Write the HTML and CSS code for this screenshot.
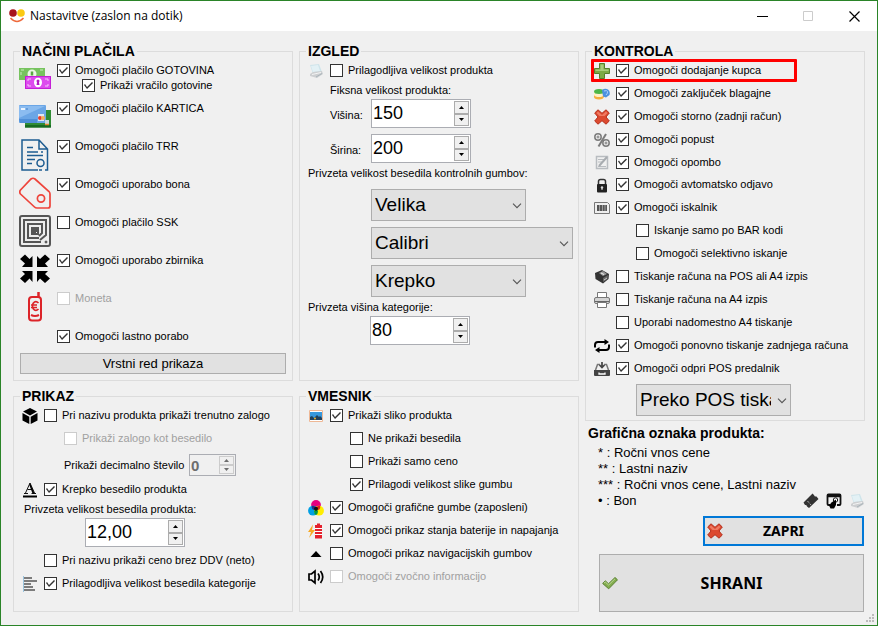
FILE: index.html
```html
<!DOCTYPE html>
<html lang="sl">
<head>
<meta charset="utf-8">
<title>Nastavitve (zaslon na dotik)</title>
<link rel="stylesheet" href="styles.css">
</head>
<body>
<svg class="defs" aria-hidden="true">
  <symbol id="scanner" viewBox="0 0 16 16"><path d="M2 2l9-1 3 8-9 2z" fill="#cfe4ea"/><path d="M3 3l7-1 2 6-7 1z" fill="#e3f1f5"/><path d="M2 11l3-2 9-1 1 3-6 4-7-2z" fill="#cdcfd1"/><path d="M4 11.500l9-2" stroke="#f4f4f4" fill="none"/><path d="M8 14l6-3.500" stroke="#a9b4bb" fill="none"/></symbol>
  <symbol id="cross" viewBox="0 0 16 16"><path d="M4 .8l4 3.500 4-3.500 3.300 3.200L12 8l3.300 4-3.300 3.200-4-3.500-4 3.500L.7 12 4 8 .7 4z" fill="#dc4a30" stroke="#b5301d" stroke-linejoin="round"/><path d="M4 2.500l4 3.500 4-3.500 1.500 1.500L10.500 7h-5l-3-3z" fill="#f07a62"/></symbol>
  <symbol id="spin-up" viewBox="0 0 5 3"><path d="M0 3h5L2.500 0z" fill="currentColor"/></symbol>
  <symbol id="spin-down" viewBox="0 0 5 3"><path d="M0 0h5L2.500 3z" fill="currentColor"/></symbol>
  <symbol id="chevron" viewBox="0 0 10 6"><path d="M1 .7l4 4 4-4" fill="none" stroke="#555" stroke-width="1.100"/></symbol>
</svg>
<div class="window">
  <header class="titlebar">
    <svg class="logo" viewBox="0 0 16 14"><circle cx="4" cy="4" r="3.800" fill="#a8141c"/><circle cx="12" cy="4" r="3.800" fill="#fbc912"/><path d="M1.500 9q6.500 7 13 0" fill="none" stroke="#ee6a3c" stroke-width="1.500"/></svg>
    <h1>Nastavitve (zaslon na dotik)</h1>
    <button class="caption" aria-label="Minimiraj"><svg viewBox="0 0 11 11"><path d="M0 5.500h11" stroke="#000"/></svg></button>
    <button class="caption" aria-label="Povečaj" disabled><svg viewBox="0 0 11 11"><path d="M.5.5h9v9h-9z" fill="none" stroke="#ccc"/></svg></button>
    <button class="caption" aria-label="Zapri okno"><svg viewBox="0 0 11 11"><path d="M.5.5l10 10M10.500.5l-10 10" stroke="#000" stroke-width="1.200"/></svg></button>
  </header>
  <main>
    <div class="column">
      <fieldset class="payments">
        <legend>NAČINI PLAČILA</legend>
        <div class="pay">
          <svg viewBox="0 0 32 32"><path d="M0 5h26v12H0z" fill="#77c35f"/><path d="M2 7h22v9H2z" fill="none" stroke="#c9edbd" stroke-dasharray="3 16"/><ellipse cx="13" cy="11" rx="4.500" ry="4.500" fill="#eaf7e5"/><path d="M13 8.500v4" stroke="#5aa744" stroke-width="2.500"/><path d="M6 13h26v13H6z" fill="#c41fd6"/><path d="M7 14h24v11H7z" fill="#dd4bee"/><path d="M9 18v-2h3M26 16h3v2M9 21v2h3M26 23h3v-2" fill="none" stroke="#f6c6fb"/><ellipse cx="19" cy="19.500" rx="4" ry="4.800" fill="#fff"/><path d="M17.500 18a1.500 1.500 0 013 0l-.5 1.500.5 2.500h-3l.5-2.500z" fill="#b21ac4"/></svg>
          <div><label><input type="checkbox" checked><span>Omogoči plačilo GOTOVINA</span></label>
          <label class="sub"><input type="checkbox" checked><span>Prikaži vračilo gotovine</span></label></div>
        </div>
        <div class="pay">
          <svg viewBox="0 0 32 32"><path d="M6 9h26v17.500H6z" fill="#2f8b34"/><path d="M6 24h26v2.500H6z" fill="#176b22"/><rect y="4" width="27" height="18" rx="1" fill="#6ba6e6"/><path d="M0 5h26L0 17z" fill="#8bbcf0"/><path d="M2 8h4" stroke="#e9f3ff" stroke-width="2"/><path d="M7 8h2" stroke="#3e7fc8"/><path d="M0 18h18v4H1z" fill="#4f8fd8"/><path d="M19 13h6v7h-6z" fill="#dfe8f2"/><circle cx="21" cy="17" r="2" fill="#e63c2c"/><circle cx="24" cy="17" r="2" fill="#f5b05a"/><path d="M26 19h4v5h-4z" fill="#c9d8dc"/><path d="M26 23.500h4" stroke="#e6842c" stroke-width="1.500"/></svg>
          <div><label><input type="checkbox" checked><span>Omogoči plačilo KARTICA</span></label></div>
        </div>
        <div class="pay">
          <svg viewBox="0 0 32 32" fill="none" stroke="#1d5c91" stroke-width="1.500"><path d="M19 31H3V1h17l8.500 9v21H26M20 1v9h8.500M8 8.500h6M8 13h11M22 13h2M8 16.500h16M8 20.500h8M8 24.500h5M20 31h3"/><circle cx="21.500" cy="24" r="3.500"/></svg>
          <div><label><input type="checkbox" checked><span>Omogoči plačilo TRR</span></label></div>
        </div>
        <div class="pay">
          <svg viewBox="0 0 32 32" fill="none" stroke="#ee443b" stroke-width="1.700"><path d="M12 2q2-1.500 4 0L30 14.500q1 1 1 2.500v12q0 2-2 2H18q-1.500 0-2.500-1L1.500 17q-1.500-2 0-4z"/><circle cx="22" cy="21.500" r="3.600"/></svg>
          <div><label><input type="checkbox" checked><span>Omogoči uporabo bona</span></label></div>
        </div>
        <div class="pay">
          <svg viewBox="0 0 32 32" fill="none" stroke="#555" stroke-width="2"><rect x="1" y="1" width="30" height="30" rx="2" fill="#ededed"/><path d="M22 27H5V5h22v15l-6 5M20 23H9V9h14v9l-3 3M17 19v0h-4v-6h6v6z"/><path d="M12 12h8v5h-3v3h-5z" fill="#555" stroke="none"/><circle cx="27" cy="27" r="1" fill="#555" stroke-width="1"/></svg>
          <div><label><input type="checkbox"><span>Omogoči plačilo SSK</span></label></div>
        </div>
        <div class="pay">
          <svg viewBox="0 0 32 32"><path d="M13.500 14H3l3-3.500L1 6l5-4.500 4.500 4.500 3-3zM18 14h11l-3-3.500 5-4.500-5-4.500L21 6l-3-3zM13.500 18H3l3 3-5 4.500L6 30l4.500-4.500 3 3.500zM18 18h11l-3 3 5 4.500-5 4.500-5-4.500-3 3.500z"/></svg>
          <div><label><input type="checkbox" checked><span>Omogoči uporabo zbirnika</span></label></div>
        </div>
        <div class="pay">
          <svg viewBox="0 0 32 32" fill="none" stroke="#dc2429" stroke-width="2"><rect x="10" y="6" width="12" height="23.500" rx="3"/><path d="M19.500 7V1" stroke-width="2.500"/><path d="M12 24q4 2 8 0"/><path d="M19.500 12q-2-2-4-1t-2 4 2 4 4-1M12 14h6M12 16.500h6" stroke-width="1.600"/></svg>
          <div><label class="off"><input type="checkbox" disabled><span>Moneta</span></label></div>
        </div>
        <div class="pay last">
          <div><label><input type="checkbox" checked><span>Omogoči lastno porabo</span></label></div>
        </div>
        <button class="order">Vrstni red prikaza</button>
      </fieldset>
      <fieldset class="fill">
        <legend>PRIKAZ</legend>
        <div class="rows">
          <div class="row"><svg viewBox="0 0 16 16"><path d="M8 0l7 3.500-7 4-7-4zM.5 5L7.300 8.700V16L.5 12.500zM15.500 5L8.700 8.700V16l6.800-3.500z"/></svg><label><input type="checkbox"><span>Pri nazivu produkta prikaži trenutno zalogo</span></label></div>
          <div class="row nested"><label class="off"><input type="checkbox" disabled><span>Prikaži zalogo kot besedilo</span></label></div>
          <div class="decimals"><label for="dec">Prikaži decimalno število</label><div class="spin small"><input id="dec" type="text" value="0" disabled><div><button disabled aria-label="Več"><svg><use href="#spin-up"/></svg></button><button disabled aria-label="Manj"><svg><use href="#spin-down"/></svg></button></div></div></div>
          <div class="row"><svg viewBox="0 0 16 16"><path d="M1 14.500h14" stroke="#000" stroke-width="2"/><path d="M2 11.500h4M9.500 11.500H14M3.500 11L8 1l4.500 10M5.500 7.500h5" fill="none" stroke="#111"/><path d="M8 1l4.500 10.500h-2L7.300 3z"/></svg><label><input type="checkbox" checked><span>Krepko besedilo produkta</span></label></div>
          <label class="caption-line" for="prodsize">Privzeta velikost besedila produkta:</label>
          <div class="spin product"><input id="prodsize" type="text" value="12,00"><div><button aria-label="Več"><svg><use href="#spin-up"/></svg></button><button aria-label="Manj"><svg><use href="#spin-down"/></svg></button></div></div>
          <div class="row"><label class="no-icon"><input type="checkbox"><span>Pri nazivu prikaži ceno brez DDV (neto)</span></label></div>
          <div class="row"><svg viewBox="0 0 16 16"><path d="M1.500 0v16" stroke="#9bc4de"/><path d="M2 2h8M2 5h13M2 8h7M2 11h9M2 14h11" stroke="#555" stroke-width="1.700"/></svg><label><input type="checkbox" checked><span>Prilagodljiva velikost besedila kategorije</span></label></div>
        </div>
      </fieldset>
    </div>

    <div class="column">
      <fieldset class="look">
        <legend>IZGLED</legend>
        <div class="rows">
          <div class="row"><svg><use href="#scanner"/></svg><label><input type="checkbox"><span>Prilagodljiva velikost produkta</span></label></div>
          <p class="fixed">Fiksna velikost produkta:</p>
          <div class="measures">
            <div class="measure"><label for="h">Višina:</label><div class="spin"><input id="h" type="text" value="150"><div><button aria-label="Več"><svg><use href="#spin-up"/></svg></button><button aria-label="Manj"><svg><use href="#spin-down"/></svg></button></div></div></div>
            <div class="measure"><label for="w">Širina:</label><div class="spin"><input id="w" type="text" value="200"><div><button aria-label="Več"><svg><use href="#spin-up"/></svg></button><button aria-label="Manj"><svg><use href="#spin-down"/></svg></button></div></div></div>
          </div>
          <label class="line" for="textsize">Privzeta velikost besedila kontrolnih gumbov:</label>
          <div class="selects">
            <div class="select"><select id="textsize"><option>Velika</option></select><svg><use href="#chevron"/></svg></div>
            <div class="select wide"><select aria-label="Pisava"><option>Calibri</option></select><svg><use href="#chevron"/></svg></div>
            <div class="select"><select aria-label="Slog pisave"><option>Krepko</option></select><svg><use href="#chevron"/></svg></div>
          </div>
          <label class="line" for="cat">Privzeta višina kategorije:</label>
          <div class="spin category"><input id="cat" type="text" value="80"><div><button aria-label="Več"><svg><use href="#spin-up"/></svg></button><button aria-label="Manj"><svg><use href="#spin-down"/></svg></button></div></div>
        </div>
      </fieldset>
      <fieldset class="fill">
        <legend>VMESNIK</legend>
        <div class="rows">
          <div class="row"><svg viewBox="0 0 16 16"><path d="M1.500 2.500h13v11h-13z" fill="#fff" stroke="#eeb896"/><path d="M2 4h12v8H2z" fill="#3798dc"/><path d="M2 12V9l2-1 2 2 3-3 2 2 1-1 2 2v2z" fill="#22415a"/><circle cx="7" cy="10.500" r="1" fill="#f0b429"/></svg><label><input type="checkbox" checked><span>Prikaži sliko produkta</span></label></div>
          <div class="row nested"><label><input type="checkbox"><span>Ne prikaži besedila</span></label></div>
          <div class="row nested"><label><input type="checkbox"><span>Prikaži samo ceno</span></label></div>
          <div class="row nested"><label><input type="checkbox" checked><span>Prilagodi velikost slike gumbu</span></label></div>
          <div class="row"><svg viewBox="0 0 16 16"><circle cx="8" cy="5" r="4.900" fill="#e6007e"/><circle cx="5" cy="10.700" r="4.900" fill="#009fe3"/><circle cx="11" cy="10.700" r="4.900" fill="#ffed00"/><path d="M4 6q2-1 4 2v1l-2 1q-3-1-2-4z" fill="#2b2f83"/><path d="M12 6q-2-1-4 2v1l2 1q3-1 2-4z" fill="#e3231c"/><path d="M8 9l2 2q0 3-2 4-2-1-2-4z" fill="#009640"/><circle cx="8" cy="8.800" r="2" fill="#111"/></svg><label><input type="checkbox" checked><span>Omogoči grafične gumbe (zaposleni)</span></label></div>
          <div class="row"><svg viewBox="0 0 16 16"><path d="M5 1.500L0 9h3l-2 6 6-8H4z" fill="#f7a823"/><path d="M9 .5h3V2H9zM7 2h7v13.500H7z" fill="#e4202c"/><path d="M7 5.500h7M7 8.500h7M7 11.500h7" stroke="#fff"/></svg><label><input type="checkbox" checked><span>Omogoči prikaz stanja baterije in napajanja</span></label></div>
          <div class="row"><svg viewBox="0 0 16 16"><path d="M8 5l5.500 6h-11z"/></svg><label><input type="checkbox"><span>Omogoči prikaz navigacijskih gumbov</span></label></div>
          <div class="row"><svg viewBox="0 0 16 16" fill="none" stroke="#000" stroke-width="1.700"><path d="M1 5h2.500L7 2v12l-3.500-3H1zM10 4.500q2.500 3.500 0 7M12.500 2q4.500 6 0 12"/></svg><label class="off"><input type="checkbox" disabled><span>Omogoči zvočno informacijo</span></label></div>
        </div>
      </fieldset>
    </div>

    <div class="column side">
      <fieldset class="control">
        <legend>KONTROLA</legend>
        <div class="rows">
          <div class="row marked"><svg viewBox="0 0 16 16"><path d="M5.500.5h5v5h5v5h-5v5h-5v-5h-5v-5h5z" fill="#7caa45" stroke="#567f2b"/><path d="M6.500 1.500h3v5h5v1.500h-13V6.500h5z" fill="#a9cc7c"/></svg><label><input type="checkbox" checked><span>Omogoči dodajanje kupca</span></label></div>
          <div class="row"><svg viewBox="0 0 16 16"><path d="M0 9v2q0 2 5 2.500 4 0 5-2.500V9z" fill="#f5b03d"/><path d="M0 5v4q1 2 5 2t5-2V5z" fill="#fff0c4"/><ellipse cx="5" cy="5.500" rx="5" ry="2.500" fill="#4db748"/><path d="M8 4q3-2 6-.5 2.500 1.500 1.500 5.500L12 11.500l-3-1z" fill="#4c92df"/><path d="M10 5q3-1 3.500.5T12 9" fill="none" stroke="#a9cffa"/></svg><label><input type="checkbox" checked><span>Omogoči zaključek blagajne</span></label></div>
          <div class="row"><svg><use href="#cross"/></svg><label><input type="checkbox" checked><span>Omogoči storno (zadnji račun)</span></label></div>
          <div class="row"><svg viewBox="0 0 16 16" fill="none" stroke="#7c7c7c"><circle cx="4" cy="5" r="3.200" stroke-width="1.500"/><circle cx="4" cy="5" r="1"/><circle cx="12" cy="11" r="3.200" stroke-width="1.500"/><circle cx="12" cy="11" r="1"/><path d="M12 2L4.500 14.500" stroke-width="2"/></svg><label><input type="checkbox" checked><span>Omogoči popust</span></label></div>
          <div class="row short"><svg viewBox="0 0 16 16" fill="none" stroke="#b8bcc0"><path d="M2.500 2.500h11v12h-11z" stroke-width="1.500"/><path d="M4 5.500h6M4 8h4M4 12.500h8"/><path d="M13 3L5 12" stroke="#a8acb0" stroke-width="2"/></svg><label><input type="checkbox" checked><span>Omogoči opombo</span></label></div>
          <div class="row"><svg viewBox="0 0 16 16"><path d="M4.500 8V4.500q0-2 2-2h3q2 0 2 2V8" fill="none" stroke="#333" stroke-width="1.500"/><rect x="3" y="7" width="10" height="8.500" rx="1" fill="#222"/><circle cx="8" cy="10.500" r="1.200" fill="#ddd"/><path d="M8 11v2" stroke="#ddd"/></svg><label><input type="checkbox" checked><span>Omogoči avtomatsko odjavo</span></label></div>
          <div class="row"><svg viewBox="0 0 16 16"><path d="M.5 2.500h13l2 2v9H.5z" fill="#eee" stroke="#777"/><path d="M3 5h10v6H3z" fill="#555"/><path d="M5.500 5v6M8.500 5v6M11 5v6" stroke="#bbb" stroke-width=".7"/></svg><label><input type="checkbox" checked><span>Omogoči iskalnik</span></label></div>
          <div class="row nested"><label><input type="checkbox"><span>Iskanje samo po BAR kodi</span></label></div>
          <div class="row nested"><label><input type="checkbox"><span>Omogoči selektivno iskanje</span></label></div>
          <div class="row"><svg viewBox="0 0 16 16"><path d="M1 4l7-3 7 4-.5 5L9 14.500 1.500 10z" fill="#333"/><path d="M5 4l4-2 4 3-4 2z" fill="#999"/><path d="M9 9l5-3-.5 4L9 13z" fill="#666"/><path d="M7 4l3 1.500" stroke="#eee"/><path d="M10 11l3-2" stroke="#ccc"/></svg><label><input type="checkbox"><span>Tiskanje računa na POS ali A4 izpis</span></label></div>
          <div class="row"><svg viewBox="0 0 16 16"><path d="M3.500 6V.5h9V6" fill="#fff" stroke="#777"/><rect x=".5" y="5.500" width="15" height="6" rx="1.500" fill="#d2d2d2" stroke="#777"/><path d="M1 9.500h14" stroke="#666"/><path d="M3.500 10.500h9v5h-9z" fill="#fff" stroke="#777"/></svg><label><input type="checkbox"><span>Tiskanje računa na A4 izpis</span></label></div>
          <div class="row"><label class="no-icon"><input type="checkbox"><span>Uporabi nadomestno A4 tiskanje</span></label></div>
          <div class="row"><svg viewBox="0 0 16 16" fill="none" stroke="#000" stroke-width="2"><path d="M1 9.500V7q0-3 3-3h8M15 6.500V9q0 3-3 3H4"/><path d="M10.500 1L15 4l-4.500 3zM5.500 9L1 12l4.500 3z" fill="#000" stroke="none"/></svg><label><input type="checkbox" checked><span>Omogoči ponovno tiskanje zadnjega računa</span></label></div>
          <div class="row"><svg viewBox="0 0 16 16"><path d="M1.500 9L3.500 3.500H6M10 3.500h2.500L14.500 9" fill="none" stroke="#777" stroke-width="1.500"/><path d="M8 1v5M5.500 4L8 6.500 10.500 4" fill="none" stroke="#444" stroke-width="1.700"/><path d="M0 9h16v5q0 1-1 1H1q-1 0-1-1z" fill="#444"/><path d="M5 11.500v1.500h6v-1.500" fill="none" stroke="#fff" stroke-width="1.300"/></svg><label><input type="checkbox" checked><span>Omogoči odpri POS predalnik</span></label></div>
          <div class="select drawer"><select aria-label="Način odpiranja predalnika"><option>Preko POS tiskalnika</option></select><svg><use href="#chevron"/></svg></div>
        </div>
      </fieldset>
      <section class="marks">
        <h2>Grafična oznaka produkta:</h2>
        <div class="marks-body">
          <ul><li>* : Ročni vnos cene</li><li>** : Lastni naziv</li><li>*** : Ročni vnos cene, Lastni naziv</li><li>• : Bon</li></ul>
          <div class="tools">
            <svg viewBox="0 0 16 16"><path d="M9.500.5L11 2q.5 2 2.500 1.500L15.500 6 6 15l-2-1.500q0-2-2-1.500L.5 9.500z" fill="#333"/><path d="M4.500 8l3.500 4" stroke="#ddd" stroke-dasharray="1 1"/></svg>
            <svg viewBox="0 0 16 16"><path d="M4 12H2.500q-1 0-1-1V2.500q0-1 1-1h11q1 0 1 1V11q0 1-1 1H11" fill="none" stroke="#111" stroke-width="1.800"/><path d="M1.500 3h13" stroke="#111" stroke-width="2.500"/><circle cx="9.500" cy="7" r="2.200" fill="#fff" stroke="#111"/><path d="M10 6.500l-4.500 3-2.500 3 1.500 3h3.500l2-3.500z"/></svg>
            <svg><use href="#scanner"/></svg>
          </div>
        </div>
      </section>
      <div class="actions">
        <button class="close"><svg><use href="#cross"/></svg>ZAPRI</button>
        <button class="save"><svg viewBox="0 0 16 16"><path d="M.7 8.500L3.300 5.800l3.200 3L13 2.500l2.500 2.300-8.800 9z" fill="#83ad4e" stroke="#587f31" stroke-linejoin="round"/><path d="M2 8l1.300-1 3.300 3L13 3.800" stroke="#b9d792" fill="none"/></svg>SHRANI</button>
      </div>
    </div>
  </main>
  <svg class="grip" viewBox="0 0 9 9" fill="#bbb"><path d="M6 0h2v2H6zM3 3h2v2H3zM6 3h2v2H6zM0 6h2v2H0zM3 6h2v2H3zM6 6h2v2H6z"/></svg>
</div>
</body>
</html>
```
FILE: styles.css
```css
*, *::before, *::after { box-sizing: border-box; }
body {
  margin: 0;
  background: #f0f0f0;
  color: #000;
  font: 11px/15px "Liberation Sans", Arial, sans-serif;
}
h1, h2, p, ul { margin: 0; padding: 0; }
svg { display: block; flex: none; }
button, input, select { font: inherit; color: inherit; margin: 0; }
.defs { position: absolute; width: 0; height: 0; }

.window {
  position: relative;
  display: flex;
  flex-direction: column;
  min-height: 100vh;
  border: 1px solid #2a8428;
}
.titlebar {
  display: flex;
  align-items: center;
  height: 30px;
  padding-left: 8px;
  background: #fff;
}
.logo { width: 16px; height: 14px; }
h1 {
  flex: 1;
  padding-left: 5px;
  font: 12px/16px "Open Sans", "Noto Sans", sans-serif;
}
.caption {
  display: flex;
  align-items: center;
  justify-content: center;
  width: 46px;
  height: 30px;
  padding: 0;
  border: 0;
  background: none;
}
.caption svg { width: 11px; height: 11px; }

main {
  flex: 1;
  display: grid;
  grid-template-columns: repeat(3, minmax(0, 1fr));
  gap: 6px;
  padding: 12px 12px 13px;
}
.column { display: flex; flex-direction: column; gap: 7px; }
.side { gap: 4px; }
fieldset {
  min-width: 0;
  margin: 0;
  padding: 0 6px 6px 5px;
  border: 1px solid #dcdcdc;
}
.payments, .look { min-height: 338px; }
.fill { flex: 1; }
legend {
  margin-left: 1px;
  padding: 0 2px;
  font-weight: bold;
  font-size: 14px;
  line-height: 16px;
}

label { display: flex; align-items: center; gap: 5px; white-space: nowrap; }
input[type="checkbox"] {
  appearance: none;
  flex: none;
  width: 13px;
  height: 13px;
  border: 1px solid #333;
  background: #fff;
}
input[type="checkbox"]:checked::before {
  content: "";
  display: block;
  width: 11px;
  height: 11px;
  background: #333;
  clip-path: polygon(1px 5px, 2px 4px, 4px 7px, 9px 2px, 10px 3px, 4px 9px);
}
input[type="checkbox"]:disabled { border-color: #ccc; }
.off { color: #a0a0a0; }

.pay { display: flex; gap: 6px; height: 38px; }
.pay:first-of-type { margin-top: 4px; }
.pay > svg { width: 32px; height: 32px; }
.pay .sub { margin-left: 25px; }
.pay.last { height: 24px; padding-left: 38px; }
.order {
  display: block;
  width: calc(100% - 1px);
  height: 21px;
  margin-left: 1px;
  padding: 0;
  border: 1px solid #adadad;
  background: #e1e1e1;
  font-size: 13px;
}

.rows { padding-left: 3px; }
.row { display: flex; align-items: center; gap: 6px; height: 23px; }
.row svg { width: 16px; height: 16px; }
.nested { padding-left: 42px; }
.no-icon { margin-left: 22px; }

.spin {
  display: flex;
  width: 100px;
  height: 29px;
  padding: 1px;
  border: 1px solid #abadb3;
  background: #fff;
}
.spin input {
  flex: 1;
  min-width: 0;
  padding: 0;
  border: 0;
  background: none;
  font-size: 18px;
}
.spin > div { display: flex; flex-direction: column; width: 15px; }
.spin button {
  flex: 1;
  display: flex;
  align-items: center;
  justify-content: center;
  padding: 0;
  border: 1px solid #acacac;
  background: #f0f0f0;
}
.spin svg { width: 5px; height: 3px; }
.spin.small { width: 47px; height: 22px; background: #f0f0f0; color: #6d6d6d; }
.spin.small input { font-size: 15px; font-weight: bold; }
.spin.small button { border-color: #ccc; }

.select { position: relative; width: 155px; height: 32px; }
.select.wide { width: 202px; }
.select select {
  appearance: none;
  display: block;
  width: 100%;
  height: 100%;
  padding: 0 19px 0 3px;
  border: 1px solid #adadad;
  border-radius: 0;
  background: #e1e1e1;
  font-size: 19px;
  line-height: 30px;
}
.select svg { position: absolute; right: 4px; top: 14px; width: 10px; height: 6px; pointer-events: none; }

.decimals { display: flex; height: 28px; padding: 4px 0 0 42px; }
.decimals label { width: 125px; height: 22px; }
.caption-line { height: 17px; padding-left: 2px; }
.product { margin: 0 0 2px 63px; }

.fixed { padding: 1px 0 1px 22px; }
.measures { display: flex; flex-direction: column; gap: 6px; margin-bottom: 3px; padding-left: 22px; }
.measure { display: flex; align-items: center; height: 29px; }
.measure label { width: 41px; padding-top: 4px; }
.selects { display: flex; flex-direction: column; gap: 6px; padding: 8px 0 3px 63px; }
.look .line { height: 15px; }
.category { margin: 1px 0 0 62px; }

.control { padding-bottom: 4px; }
.marked { position: relative; }
.marked::after {
  content: "";
  position: absolute;
  top: 0;
  left: -3px;
  width: 206px;
  height: 23px;
  border: 3px solid #f00;
  border-radius: 1px;
}
.short { height: 22px; }
.drawer { margin: 4px 0 0 42px; }

.marks { padding-left: 3px; }
h2 { font-size: 14px; line-height: 16px; margin-bottom: 4px; }
.marks-body { display: flex; align-items: flex-end; justify-content: space-between; font-size: 13px; }
.marks ul { padding-left: 10px; list-style: none; line-height: 16px; white-space: nowrap; }
.tools { display: flex; gap: 7px; flex: none; margin-left: -20px; }
.tools svg { width: 16px; height: 16px; }
.actions { flex: 1; display: flex; flex-direction: column; align-items: flex-end; gap: 8px; padding: 3px 1px 0 14px; }
.actions button {
  position: relative;
  border: 1px solid #adadad;
  background: #e1e1e1;
  font: bold 16px/20px "Noto Sans", "Open Sans", sans-serif;
}
.actions .close { width: 161px; height: 30px; border: 2px solid #0078d7; font-size: 14px; }
.actions .save { flex: 1; width: 100%; }
.actions svg { position: absolute; left: 2px; top: 50%; width: 16px; height: 16px; margin-top: -8px; }
.grip { position: absolute; right: 2px; bottom: 2px; width: 9px; height: 9px; }
```
